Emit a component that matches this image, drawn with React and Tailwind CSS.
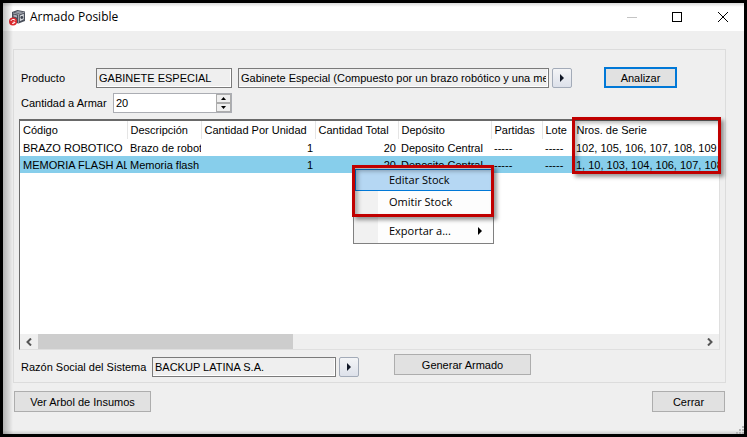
import clsx from "clsx";

const COLUMNS = [
  { key: "codigo", label: "Código", width: "w-[107px]" },
  { key: "descripcion", label: "Descripción", width: "w-[74px]" },
  { key: "porUnidad", label: "Cantidad Por Unidad", width: "w-[114px]", numeric: true },
  { key: "total", label: "Cantidad Total", width: "w-[83px]", numeric: true },
  { key: "deposito", label: "Depósito", width: "w-[93px]" },
  { key: "partidas", label: "Partidas", width: "w-[51px]" },
  { key: "lote", label: "Lote", width: "w-[31px]" },
  { key: "series", label: "Nros. de Serie" },
];

const ROWS = [
  {
    codigo: "BRAZO ROBOTICO",
    descripcion: "Brazo de robot",
    porUnidad: "1",
    total: "20",
    deposito: "Deposito Central",
    partidas: "-----",
    lote: "-----",
    series: "102, 105, 106, 107, 108, 109",
  },
  {
    codigo: "MEMORIA FLASH AL",
    descripcion: "Memoria flash",
    porUnidad: "1",
    total: "20",
    deposito: "Deposito Central",
    partidas: "-----",
    lote: "-----",
    series: "1, 10, 103, 104, 106, 107, 108",
    selected: true,
  },
];

function AppIcon() {
  return (
    <svg viewBox="0 0 17 17" className="h-[17px] w-[17px]" aria-hidden="true">
      <path d="M3 3l5.500-2L16 2.500v9.500l-6.500 2.500L3 13z" fill="#4a4f5b" />
      <path d="M5.500 3.200L9 1.900l5 1-3.800 1.500z" fill="#9a9fa9" />
      <path d="M9.500 5.300v8.500M4 4l5.500 1.300L15.500 3.200" stroke="#c3c6cc" strokeWidth=".7" fill="none" />
      <path d="M10.800 6.500l4-1.800v5.600l-4 1.900z" fill="#d5d8dd" />
      <circle cx="12.800" cy="8.500" r="1.400" fill="#3f4450" />
      <path d="M4.500 5.500l3.500.9v2L4.500 7.500z" fill="#aeb2ba" />
      <circle cx="4" cy="12.500" r="4" fill="#e02a2e" />
      <path d="M1.800 12c.6-1.800 3-2.200 4.400-.7M3 14.300c1 .6 2.500.3 3-1.100H3.800" stroke="#fff" strokeWidth="1" fill="none" />
    </svg>
  );
}

function TitleBar() {
  return (
    <header className="flex h-7 items-center bg-white pl-1.5">
      <AppIcon />
      <h1 className="ml-1 flex-1 font-['Open_Sans',sans-serif] text-[12px]">Armado Posible</h1>
      <button type="button" aria-label="Minimizar" className="grid h-7 w-10 place-items-center text-[#c4c4c4]">
        <svg viewBox="0 0 10 10" className="h-2.5 w-2.5"><path d="M0 5.500h10" stroke="currentColor" /></svg>
      </button>
      <button type="button" aria-label="Maximizar" className="grid h-7 w-[50px] place-items-center">
        <svg viewBox="0 0 10 10" className="h-2.5 w-2.5"><rect x=".5" y=".5" width="9" height="9" fill="none" stroke="currentColor" /></svg>
      </button>
      <button type="button" aria-label="Cerrar ventana" className="grid h-7 w-[42px] place-items-center">
        <svg viewBox="0 0 10 10" className="h-2.5 w-2.5"><path d="M0 0l10 10M10 0L0 10" stroke="currentColor" /></svg>
      </button>
    </header>
  );
}

function PushButton({ className, focused, children }) {
  return (
    <button
      type="button"
      className={clsx(
        "h-[21px] shrink-0 bg-[#e1e1e1] leading-4",
        focused ? "border-2 border-[#0078d7]" : "border border-[#adadad]",
        className
      )}
    >
      {children}
    </button>
  );
}

function LookupButton({ label }) {
  return (
    <button
      type="button"
      aria-label={label}
      className="grid h-5 w-5 shrink-0 place-items-center rounded-xs border border-[#a3abb8] bg-linear-to-b from-[#f4f5f7] to-[#dde1ea]"
    >
      <svg viewBox="0 0 4 8" className="h-2 w-1"><path d="M0 0l4 4-4 4z" fill="#111827" /></svg>
    </button>
  );
}

function ReadOnlyField({ className, ...props }) {
  return (
    <input
      type="text"
      readOnly
      className={clsx("h-5 min-w-0 border border-[#7a7a7a] bg-[#efefef] px-0.5 shadow-[inset_-1px_-1px_0_#ffffff]", className)}
      {...props}
    />
  );
}

function QuantitySpinner() {
  return (
    <div className="flex h-5 w-[119px] border border-[#abadb3] bg-white">
      <input id="cantidad" type="text" inputMode="numeric" defaultValue="20" className="w-0 min-w-0 flex-1 px-0.5" />
      <div className="flex w-[15px] flex-col">
        <button type="button" aria-label="Aumentar" className="grid flex-1 place-items-center border border-[#acacac] bg-[#efefef]">
          <svg viewBox="0 0 5 3" className="h-[3px] w-[5px]"><path d="M0 3l2.500-3L5 3z" /></svg>
        </button>
        <button type="button" aria-label="Disminuir" className="grid flex-1 place-items-center border border-[#acacac] bg-[#efefef]">
          <svg viewBox="0 0 5 3" className="h-[3px] w-[5px]"><path d="M0 0l2.500 3L5 0z" /></svg>
        </button>
      </div>
    </div>
  );
}

function Highlight({ className }) {
  return <div className={clsx("pointer-events-none absolute border-3 border-[#c00000] shadow-[3px_3px_4px_rgba(0,0,0,0.4),inset_3px_3px_4px_rgba(0,0,0,0.3)]", className)} />;
}

function StockTable() {
  return (
    <table className="w-full table-fixed border-collapse">
      <thead>
        <tr className="h-[18px]">
          {COLUMNS.map((col) => (
            <th
              key={col.key}
              scope="col"
              className={clsx("overflow-hidden border-r border-[#e5e5e5] p-0 pl-[3px] text-left font-normal whitespace-nowrap last:border-r-0", col.width)}
            >
              {col.label}
            </th>
          ))}
        </tr>
      </thead>
      <tbody>
        {ROWS.map((row) => (
          <tr key={row.codigo} className={clsx("h-[17px]", row.selected && "bg-[#87ceeb]")}>
            {COLUMNS.map((col) => (
              <td
                key={col.key}
                className={clsx("overflow-hidden p-0 whitespace-nowrap", col.numeric ? "pr-0.5 text-right" : "pl-[3px]")}
              >
                {row[col.key]}
              </td>
            ))}
          </tr>
        ))}
      </tbody>
    </table>
  );
}

function ScrollBar() {
  return (
    <div className="mt-auto flex h-[15px] bg-[#efefef]">
      <button type="button" aria-label="Desplazar a la izquierda" className="grid w-[18px] place-items-center">
        <svg viewBox="0 0 6 8" className="h-2 w-1.5"><path d="M5 .5L1.500 4 5 7.500" fill="none" stroke="#555" strokeWidth="2" /></svg>
      </button>
      <div className="flex-1">
        <div className="h-full w-5/13 bg-[#cdcdcd]" />
      </div>
      <button type="button" aria-label="Desplazar a la derecha" className="grid w-[18px] place-items-center">
        <svg viewBox="0 0 6 8" className="h-2 w-1.5"><path d="M1 .5L4.500 4 1 7.500" fill="none" stroke="#555" strokeWidth="2" /></svg>
      </button>
    </div>
  );
}

function ContextMenu() {
  return (
    <div className="absolute top-[46px] left-[333px] w-[141px]">
      <div
        role="menu"
        className="flex flex-col border border-[#808080] bg-linear-to-r from-[#f1f1f1] from-[24px] to-[#fdfdfd] to-[24px] p-px font-['Open_Sans',sans-serif]"
      >
        <button type="button" role="menuitem" className="h-[22px] border border-[#0078d7] bg-[#b5d7f3] pl-[33px] text-left">
          Editar Stock
        </button>
        <button type="button" role="menuitem" className="h-[22px] pl-[34px] text-left">Omitir Stock</button>
        <div role="separator" className="my-[3px] ml-[30px] border-t border-[#d7d7d7]" />
        <button type="button" role="menuitem" className="flex h-[22px] items-center justify-between pr-2.5 pl-[34px]">
          Exportar a...
          <svg viewBox="0 0 4 8" className="h-2 w-1"><path d="M0 0l4 4-4 4z" /></svg>
        </button>
      </div>
      <Highlight className="-top-0.5 -left-px h-[52px] w-[142px]" />
    </div>
  );
}

export default function App() {
  return (
    <div className="relative flex min-h-screen flex-col border-3 border-black bg-[#efefef] font-['Liberation_Sans',Arial,sans-serif] text-[11px] leading-4 text-black">
      <TitleBar />

      <main className="flex flex-1 flex-col pt-[18px] pr-[18px] pb-[22px] pl-2.5">
        <section className="flex flex-1 flex-col border border-[#dcdcdc] p-[5px] pt-[17px]">
          <div className="flex items-center pl-0.5">
            <label htmlFor="producto" className="w-[75px] whitespace-nowrap">Producto</label>
            <ReadOnlyField id="producto" className="w-[136px]" defaultValue="GABINETE ESPECIAL" />
            <ReadOnlyField
              aria-label="Descripción del producto"
              className="ml-1.5 flex-1"
              defaultValue="Gabinete Especial (Compuesto por un brazo robótico y una memoria flash)"
            />
            <div className="ml-[3px] flex"><LookupButton label="Buscar producto" /></div>
            <PushButton focused className="mr-[43px] ml-8 w-[73px]">Analizar</PushButton>
          </div>

          <div className="mt-[5px] flex items-center pl-0.5">
            <label htmlFor="cantidad" className="w-[92px] whitespace-nowrap">Cantidad a Armar</label>
            <QuantitySpinner />
          </div>

          <div className="relative mt-1.5 flex flex-1 flex-col border border-t-2 border-[#dfdfdf] border-t-[#696969] border-l-[#696969] bg-white">
            <StockTable />
            <ScrollBar />
            <Highlight className="-top-1 -right-0.5 h-[57px] w-[149px]" />
            <ContextMenu />
          </div>

          <div className="mt-1 flex items-end pl-0.5">
            <div className="flex items-center pt-[3px]">
              <label htmlFor="razon" className="w-[131px] whitespace-nowrap">Razón Social del Sistema</label>
              <ReadOnlyField id="razon" className="w-[184px]" defaultValue="BACKUP LATINA S.A." />
              <div className="ml-[3px] flex"><LookupButton label="Buscar razón social" /></div>
            </div>
            <PushButton className="ml-[35px] w-[137px] self-start">Generar Armado</PushButton>
          </div>
        </section>

        <footer className="mt-2 flex justify-between px-px">
          <PushButton className="w-[137px]">Ver Arbol de Insumos</PushButton>
          <PushButton className="w-[73px]">Cerrar</PushButton>
        </footer>
      </main>

      <div className="pointer-events-none absolute inset-y-0 left-0 w-2.5 bg-linear-to-r from-black/25 to-transparent" />
      <div className="pointer-events-none absolute inset-x-0 top-0 h-1 bg-linear-to-b from-black/15 to-transparent" />
      <div className="pointer-events-none absolute inset-x-0 bottom-0 h-1 bg-linear-to-t from-black/15 to-transparent" />
      <svg viewBox="0 0 8 8" className="absolute right-0 bottom-0 h-2 w-2" fill="#b4b4b4" aria-hidden="true">
        <path d="M6 0h2v2H6zM3 3h2v2H3zM6 3h2v2H6zM0 6h2v2H0zM3 6h2v2H3zM6 6h2v2H6z" />
      </svg>
    </div>
  );
}
